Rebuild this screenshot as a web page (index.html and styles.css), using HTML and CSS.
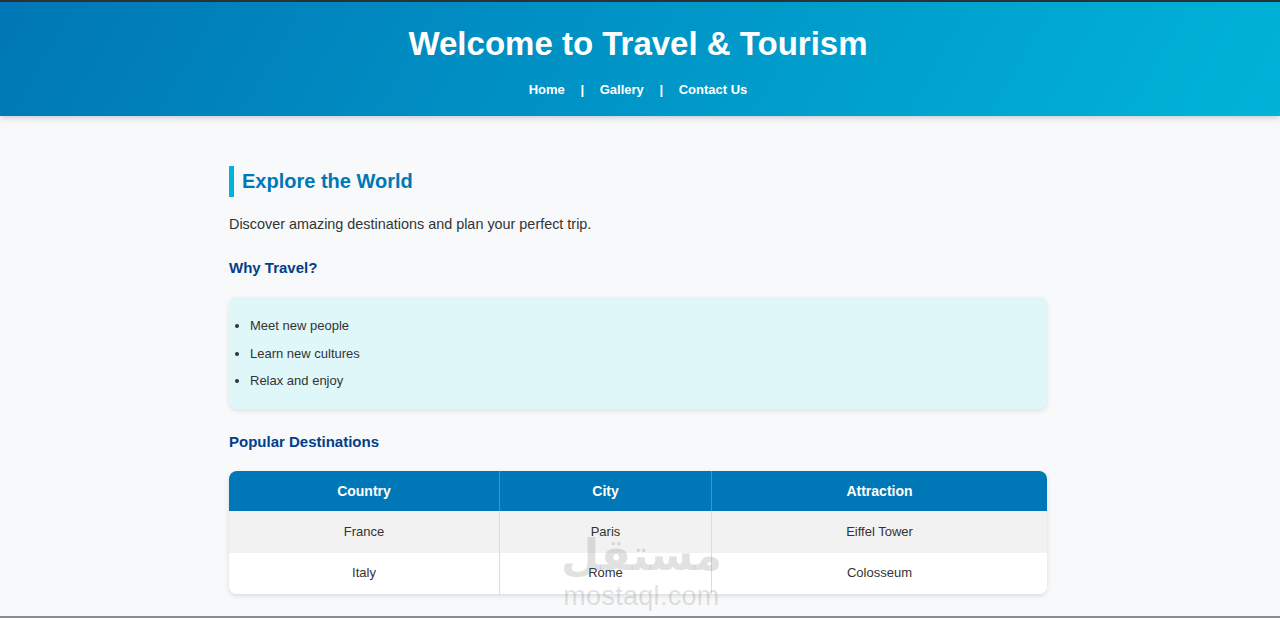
FILE: index.html
```html
<!DOCTYPE html>
<html lang="en">
<head>
<meta charset="utf-8">
<title>Travel & Tourism</title>
<link rel="stylesheet" href="styles.css">
</head>
<body>
<header class="site-header">
  <h1 class="site-title">Welcome to Travel &amp; Tourism</h1>
  <nav class="site-nav">
    <a href="#">Home</a>
    <span class="sep">|</span>
    <a href="#">Gallery</a>
    <span class="sep">|</span>
    <a href="#">Contact Us</a>
  </nav>
</header>
<main class="container">
  <h2 class="section-title">Explore the World</h2>
  <p class="intro">Discover amazing destinations and plan your perfect trip.</p>
  <h3 class="sub-title">Why Travel?</h3>
  <ul class="reasons">
    <li>Meet new people</li>
    <li>Learn new cultures</li>
    <li>Relax and enjoy</li>
  </ul>
  <h3 class="sub-title">Popular Destinations</h3>
  <table class="dest">
    <thead>
      <tr><th class="c1">Country</th><th class="c2">City</th><th>Attraction</th></tr>
    </thead>
    <tbody>
      <tr class="r1"><td>France</td><td>Paris</td><td>Eiffel Tower</td></tr>
      <tr class="r2"><td>Italy</td><td>Rome</td><td>Colosseum</td></tr>
    </tbody>
  </table>
</main>
<div class="watermark">
  <span class="wm-ar">مستقل</span>
  <span class="wm-en">mostaql.com</span>
</div>
</body>
</html>
```
FILE: styles.css
```css
html, body {
  margin: 0;
  padding: 0;
}
body {
  background: #f7f9fb;
  font-family: "Liberation Sans", Arial, sans-serif;
  color: #333;
  border-top: 2px solid #2b3138;
  border-bottom: 2px solid #8a8d90;
  min-height: 614px;
  box-sizing: content-box;
  position: relative;
}
.site-header {
  background: linear-gradient(120deg, #0077b6 0%, #00b4d8 100%);
  color: #fff;
  text-align: center;
  height: 114px;
  box-sizing: border-box;
  padding-top: 23px;
  padding-right: 4px;
  box-shadow: 0 2px 6px rgba(0, 0, 0, 0.18);
}
.site-title {
  margin: 0;
  font-size: 33px;
  line-height: 38px;
  font-weight: bold;
}
.site-nav {
  margin-top: 18px;
  font-size: 13px;
  font-weight: bold;
  line-height: 18px;
}
.site-nav a {
  color: #fff;
  text-decoration: none;
}
.site-nav .sep {
  margin: 0 12px;
}
.container {
  width: 818px;
  margin: 0 auto;
  padding: 50px 4px 0 0;
}
.section-title {
  margin: 0;
  font-size: 20px;
  line-height: 31px;
  color: #0077b6;
  border-left: 5px solid #00b4d8;
  padding-left: 8px;
}
.intro {
  margin: 17px 0 0;
  font-size: 14.4px;
  line-height: 20px;
  color: #333;
}
.sub-title {
  margin: 24px 0 0;
  font-size: 15px;
  line-height: 20px;
  color: #023e8a;
}
.reasons {
  margin: 19px 0 0;
  background: #e0f7fa;
  border-radius: 8px;
  box-shadow: 0 2px 5px rgba(0, 0, 0, 0.1);
  padding: 20px 0 0 21px;
  font-size: 13px;
  line-height: 18px;
  color: #333;
  height: 112px;
  box-sizing: border-box;
}
.reasons li {
  margin-bottom: 9.5px;
}
.reasons + .sub-title {
  margin-top: 23px;
}
.dest {
  margin-top: 19px;
  width: 818px;
  border-collapse: separate;
  border-spacing: 0;
  border-radius: 8px;
  overflow: hidden;
  box-shadow: 0 2px 5px rgba(0, 0, 0, 0.12);
  font-size: 13px;
  background: #fff;
}
.dest th {
  background: #0077b6;
  color: #fff;
  font-weight: bold;
  height: 40px;
  padding: 0;
  font-size: 14px;
}
.dest td {
  height: 41px;
  padding: 0 0 2px;
  text-align: center;
  color: #333;
}
.dest .r1 td {
  height: 40px;
}
.dest th, .dest td {
  border-right: 1px solid #dcdcdc;
}
.dest th {
  border-right-color: #3d97c9;
}
.dest th:last-child, .dest td:last-child {
  border-right: none;
}
.dest .c1 { width: 270px; }
.dest .c2 { width: 211px; }
.dest .r1 td {
  background: #f2f2f2;
}
.dest .r2 td {
  height: 39px;
  background: #fff;
}
.watermark {
  position: absolute;
  left: 561px;
  top: 525px;
  display: flex;
  flex-direction: column;
  align-items: center;
  color: rgba(120, 120, 120, 0.22);
  pointer-events: none;
}
.wm-ar {
  font-family: "DejaVu Sans", sans-serif;
  font-weight: bold;
  font-size: 44px;
  line-height: 56px;
}
.wm-en {
  font-family: "Liberation Sans", sans-serif;
  font-size: 27px;
  line-height: 26px;
  letter-spacing: 0.3px;
}
```
